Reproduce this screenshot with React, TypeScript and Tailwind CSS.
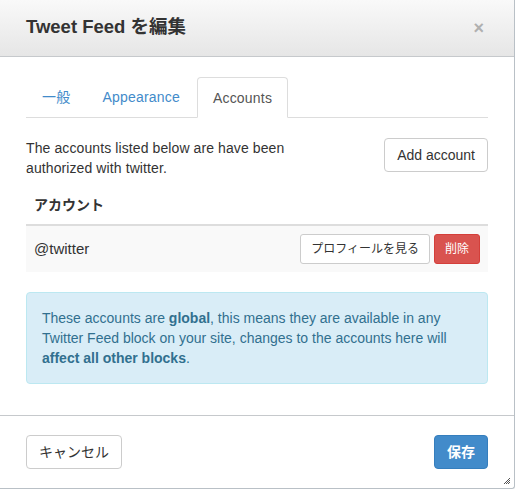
import React from 'react';

const FONT = '"Liberation Sans", Arial, "Noto Sans CJK JP", sans-serif';

const TABS = ['一般', 'Appearance', 'Accounts'];

const App: React.FC = () => {
  const activeTab = 'Accounts';

  return (
    <div className="bg-white w-[516px] h-[490px]" style={{ fontFamily: FONT }}>
      <div className="relative flex flex-col w-[515px] h-[489px] border-r border-b border-[#b9c0c6] rounded-br-[3px] text-[14px] text-[#333]">
        {/* Header */}
        <div className="flex items-center justify-between h-[57px] pl-[26px] pr-[30px] border-b border-[#c6c9cc] bg-gradient-to-b from-[#f9f9f9] to-[#e6e6e6]">
          <h3 className="text-[18.5px] font-bold text-[#333] leading-none pb-[1px]">Tweet Feed を編集</h3>
          <span className="text-[#b0b0b0] text-[18px] font-bold leading-none">×</span>
        </div>

        {/* Body */}
        <div className="flex-1 px-[26px] pt-[20px]">
          <ul className="flex border-b border-[#ddd] pl-[1px] h-[41px] tracking-[0.2px]">
            {TABS.map(tab => (
              <li
                key={tab}
                className={
                  tab === activeTab
                    ? 'mr-[2px] px-[15px] leading-[20px] py-[10px] border border-[#ddd] border-b-white rounded-t-[4px] bg-white text-[#555] -mb-[1px]'
                    : 'mr-[2px] px-[15px] leading-[20px] py-[10px] text-[#428bca]'
                }
              >
                {tab}
              </li>
            ))}
          </ul>

          <div className="flex justify-between items-start pt-[20px]">
            <p className="leading-[20px] w-[300px] tracking-[0.1px]">
              The accounts listed below are have been authorized with twitter.
            </p>
            <button className="h-[34px] px-[12px] border border-[#ccc] rounded-[4px] bg-white text-[#333] text-[14px]">
              Add account
            </button>
          </div>

          <table className="w-full mt-[9px] mb-[20px] border-collapse">
            <thead>
              <tr>
                <th className="text-left font-bold px-[8px] pt-[8px] pb-[9px] leading-[20px] border-b-2 border-[#ddd]">アカウント</th>
                <th className="border-b-2 border-[#ddd]"></th>
              </tr>
            </thead>
            <tbody>
              <tr className="bg-[#f9f9f9]">
                <td className="px-[8px] py-[8px] text-[15px]">@twitter</td>
                <td className="px-[8px] py-[8px]">
                  <div className="flex justify-end gap-[4px]">
                    <button className="h-[30px] px-[10px] border border-[#ccc] rounded-[3px] bg-white text-[12px] text-[#333]">
                      プロフィールを見る
                    </button>
                    <button className="h-[30px] px-[10px] border border-[#d43f3a] rounded-[3px] bg-[#d9534f] text-[12px] text-white">
                      削除
                    </button>
                  </div>
                </td>
              </tr>
            </tbody>
          </table>

          <div className="border border-[#bce8f1] bg-[#d9edf7] text-[#31708f] rounded-[4px] p-[15px] leading-[20px]">
            These accounts are <strong>global</strong>, this means they are available in any Twitter Feed block on your site, changes to the accounts here will <strong>affect all other blocks</strong>.
          </div>
        </div>

        {/* Footer */}
        <div className="flex justify-between items-start h-[73px] shrink-0 px-[26px] pt-[19px] border-t border-[#c6c9cc]">
          <button className="h-[34px] px-[12px] border border-[#ccc] rounded-[4px] bg-white text-[#333] text-[14px]">
            キャンセル
          </button>
          <button className="h-[34px] px-[12px] border border-[#357ebd] rounded-[4px] bg-[#428bca] text-white font-bold text-[14px]">
            保存
          </button>
        </div>

        {/* resize grip */}
        <svg className="absolute right-[3px] bottom-[3px]" width="8" height="8" viewBox="0 0 8 8">
          <path d="M1 7 L7 1 M3 7 L7 3 M5 7 L7 5" stroke="#555" strokeWidth="1" />
        </svg>
      </div>
    </div>
  );
};

export default App;
